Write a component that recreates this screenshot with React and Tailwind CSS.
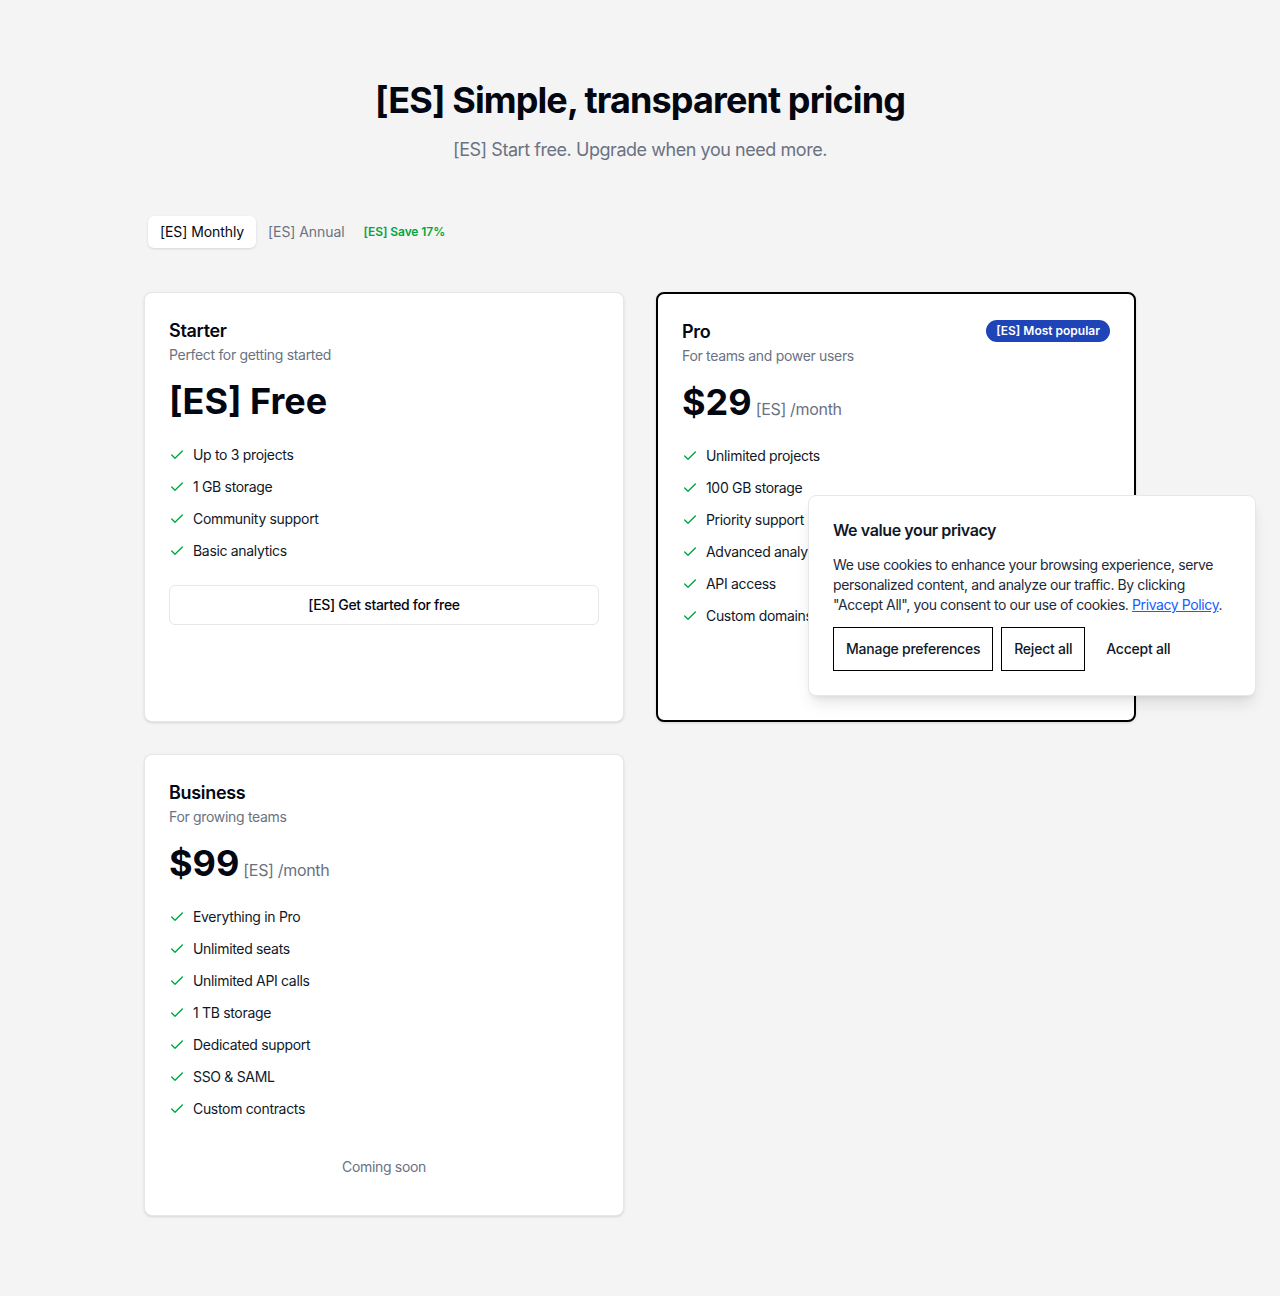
import { useState } from 'react';

const plans = [
  {
    name: 'Starter',
    desc: 'Perfect for getting started',
    price: '[ES] Free',
    period: null,
    features: ['Up to 3 projects', '1 GB storage', 'Community support', 'Basic analytics'],
    cta: '[ES] Get started for free',
  },
  {
    name: 'Pro',
    desc: 'For teams and power users',
    price: '$29',
    period: '[ES] /month',
    popular: true,
    features: [
      'Unlimited projects',
      '100 GB storage',
      'Priority support',
      'Advanced analytics',
      'API access',
      'Custom domains',
    ],
  },
  {
    name: 'Business',
    desc: 'For growing teams',
    price: '$99',
    period: '[ES] /month',
    features: [
      'Everything in Pro',
      'Unlimited seats',
      'Unlimited API calls',
      '1 TB storage',
      'Dedicated support',
      'SSO & SAML',
      'Custom contracts',
    ],
    soon: true,
  },
];

function CheckIcon() {
  return (
    <svg viewBox="0 0 24 24" className="h-4 w-4 shrink-0 text-green-600" fill="none" stroke="currentColor" strokeWidth="2" strokeLinecap="round" strokeLinejoin="round">
      <path d="M20 6 9 17l-5-5" />
    </svg>
  );
}

function PlanCard({ plan }) {
  return (
    <div
      className={`flex flex-col rounded-lg bg-white p-6 shadow-sm ${
        plan.popular ? 'border-2 border-black' : 'border border-gray-200'
      }`}
    >
      <div className="flex items-start justify-between">
        <h3 className="text-lg font-semibold leading-7 text-gray-950">{plan.name}</h3>
        {plan.popular && (
          <span className="mt-[2px] rounded-full bg-[#1e44b8] px-2.5 py-[3px] text-xs font-semibold leading-4 tracking-normal text-white">
            [ES] Most popular
          </span>
        )}
      </div>
      <p className="text-sm leading-5 text-gray-500">{plan.desc}</p>
      <div className="mt-4 flex items-baseline gap-1">
        <span className="text-4xl font-bold leading-10 tracking-normal text-gray-950">{plan.price}</span>
        {plan.period && <span className="text-base text-gray-500">{plan.period}</span>}
      </div>
      <ul className="mt-6 space-y-3">
        {plan.features.map((f) => (
          <li key={f} className="flex items-center gap-2 text-sm leading-5 text-gray-900">
            <CheckIcon />
            {f}
          </li>
        ))}
      </ul>
      {plan.soon && (
        <div className="mt-6 py-3.5 text-center text-sm leading-5 text-gray-500">Coming soon</div>
      )}
      {plan.cta && (
        <button className="mt-6 h-10 rounded-md border border-gray-200 bg-white text-sm font-medium text-gray-950">
          {plan.cta}
        </button>
      )}
      {plan.popular && <div className="mt-6 h-[46px]" />}
    </div>
  );
}

export default function App() {
  const [billing, setBilling] = useState('monthly');

  return (
    <div className="relative min-h-screen bg-[#f4f4f4] font-['Inter',sans-serif] tracking-[-0.02em] text-gray-950">
      <div className="mx-auto max-w-5xl px-4 pt-20 pb-20">
        <div className="text-center">
          <h1 className="text-4xl font-bold leading-10 tracking-tight">[ES] Simple, transparent pricing</h1>
          <p className="mt-4 text-lg leading-7 tracking-tight text-gray-500">[ES] Start free. Upgrade when you need more.</p>
        </div>

        {/* Billing toggle */}
        <div className="mt-12 mb-10 flex items-center tracking-[-0.005em]">
          <div className="flex items-center rounded-lg p-1">
            <button
              onClick={() => setBilling('monthly')}
              className={`rounded-md px-3 py-1.5 text-sm leading-5 ${
                billing === 'monthly' ? 'bg-white text-gray-950 shadow-sm' : 'text-gray-500'
              }`}
            >
              [ES] Monthly
            </button>
            <button
              onClick={() => setBilling('annual')}
              className={`rounded-md px-3 py-1.5 text-sm leading-5 ${
                billing === 'annual' ? 'bg-white text-gray-950 shadow-sm' : 'text-gray-500'
              }`}
            >
              [ES] Annual
            </button>
            <span className="ml-[7px] text-xs font-semibold text-green-600">[ES] Save 17%</span>
          </div>
        </div>

        {/* Plans */}
        <div className="grid grid-cols-2 gap-8">
          {plans.map((p) => (
            <PlanCard key={p.name} plan={p} />
          ))}
        </div>
      </div>

      {/* Cookie banner */}
      <div className="absolute top-[495px] right-6 w-[448px] rounded-lg border border-gray-200 bg-white p-6 tracking-tight shadow-lg">
        <h2 className="-mt-0.5 text-base font-semibold leading-6 text-gray-900">We value your privacy</h2>
        <p className="mt-[13px] text-sm leading-5 text-gray-800">
          We use cookies to enhance your browsing experience, serve personalized content, and analyze our traffic. By
          clicking "Accept All", you consent to our use of cookies.{' '}
          <a href="#" className="text-blue-600 underline">
            Privacy Policy
          </a>
          .
        </p>
        <div className="mt-3 flex gap-2 tracking-[-0.015em]">
          <button className="border border-black px-3 py-[11px] text-sm font-medium leading-5 text-gray-900">Manage preferences</button>
          <button className="border border-black px-3 py-[11px] text-sm font-medium leading-5 text-gray-900">Reject all</button>
          <button className="border border-transparent px-3 py-[11px] text-sm font-medium leading-5 text-gray-900">Accept all</button>
        </div>
      </div>
    </div>
  );
}
